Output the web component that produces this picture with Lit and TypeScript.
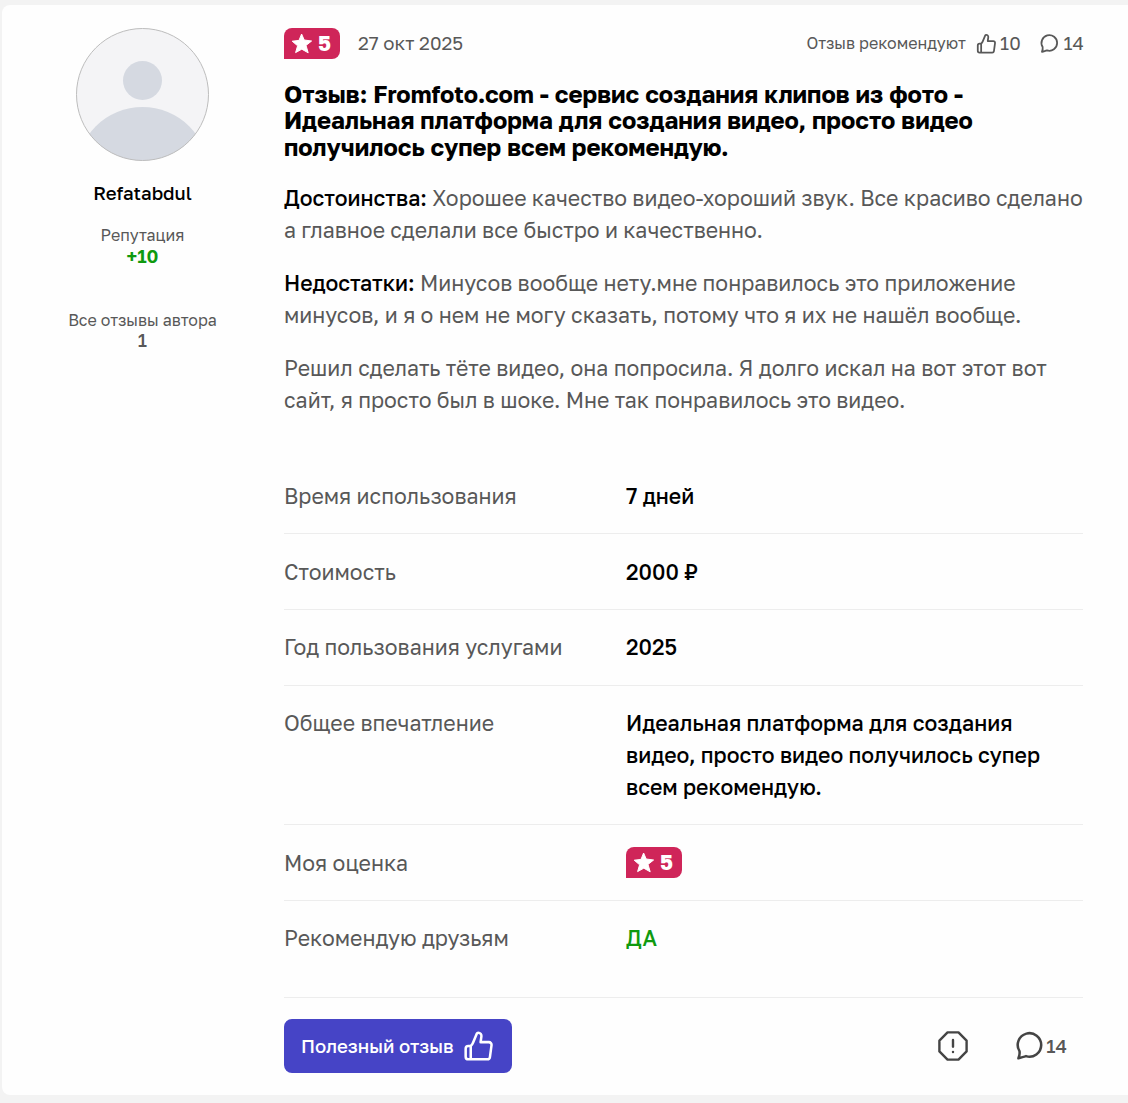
import { LitElement, html, css, svg } from "lit";
import { customElement, property } from "lit/decorators.js";

const bubble = svg`<path d="M3.3 21.2 C4.2 19.2 4.4 17.6 4.1 15.8 A8.8 8.8 0 1 1 9 19.6 C7 20.2 5.2 20.6 3.3 21.2 Z"></path>`;

@customElement("rating-badge")
class RatingBadge extends LitElement {
  @property({ type: Number }) value = 5;
  static styles = css`
    :host { display: flex; }
    .badge {
      display: flex; align-items: center; gap: 5px; box-sizing: border-box;
      width: 55.5px; height: 31.5px; padding-left: 7px;
      border-radius: 8px 8px 8px 0; background: #cf2559; color: #fff;
      font-size: 21.33px; font-weight: 700; line-height: 31px;
    }
    svg { width: 22px; height: 21px; fill: #fff; stroke: #fff; stroke-width: 1; stroke-linejoin: round; }
  `;
  render() {
    return html`<div class="badge">
      <svg viewBox="0 0 22 21"><path d="M10.6 1 L13.2 7 L20.6 8 L15 12.4 L17.2 19.8 L10.8 16.2 L4.6 19.6 L6.6 12.8 L1.2 8.2 L8 7.4 Z"></path></svg>
      <span>${this.value}</span>
    </div>`;
  }
}

@customElement("app-root")
class AppRoot extends LitElement {
  static styles = css`
    :host {
      display: block; box-sizing: border-box; height: 1103px; padding: 5px 0 8px 1.5px;
      overflow: hidden; background: #f3f3f3; color: #585858;
      font-family: "Golos Text", Inter, "Noto Sans", sans-serif;
      font-size: 21.32px; line-height: 32px;
    }
    .card {
      display: flex; box-sizing: border-box; height: 1090px;
      padding: 23px 45px 0 0; background: #fefefe; border-radius: 8px 0 0 8px;
    }
    .author { display: flex; flex-direction: column; align-items: center; flex: 0 0 282px; margin-right: 0.5px; font-size: 16px; line-height: 21.33px; }
    .avatar { width: 133px; height: 133px; }
    .name { margin-top: 22px; font-size: 18.67px; line-height: 21.33px; font-weight: 500; color: #000; }
    .stat { display: flex; flex-direction: column; align-items: center; margin-top: 21px; }
    .stat + .stat { margin-top: 45px; }
    .num { font-size: 18.67px; line-height: 18.4px; font-weight: 500; }
    .green { color: #0f9a0f; }
    .num.green { font-weight: 600; }
    .body { flex: 0 0 799px; }
    .top { display: flex; align-items: center; height: 31px; font-size: 18.67px; line-height: 31px; }
    .date { margin-left: 18.5px; }
    .rec { margin-left: auto; font-size: 16px; }
    .count { display: flex; align-items: center; gap: 3px; }
    .likes { margin-left: 10px; }
    .talks { margin: 0 -1px 0 18.5px; }
    .icon { fill: none; stroke: currentColor; stroke-linejoin: round; stroke-linecap: round; display: block; }
    .s { width: 21.33px; height: 21.33px; }
    h1 { margin: 21.5px 0 0; font-size: 23.83px; line-height: 26.6px; font-weight: 700; color: #000; white-space: nowrap; }
    p { margin: 21.33px 0 0; white-space: nowrap; }
    h1 + p { margin-top: 21.5px; }
    b { font-weight: 500; color: #000; }
    .rows { margin-top: 42.3px; }
    .row { display: grid; grid-template-columns: 342px 1fr; padding: 21.33px 0; border-bottom: 1px solid #ededed; }
    .row:last-child { padding-bottom: 42.67px; }
    .val { font-weight: 500; color: #000; }
    .val.green { color: #0f9a0f; }
    .foot { display: flex; align-items: center; margin-top: 21.33px; height: 54px; font-size: 18.67px; }
    .btn {
      display: flex; align-items: center; justify-content: space-between; box-sizing: border-box;
      width: 228px; height: 54px; padding: 0 17px; border: 0; border-radius: 8px;
      background: #4644c6; color: #fff; font: inherit; font-weight: 500;
    }
    .l { width: 32px; height: 32px; }
    .report { margin-left: auto; color: #444; }
    .reply { display: flex; align-items: center; margin: 0 16px 0 45px; font-weight: 500; }
    .reply svg { color: #444; }
  `;

  private thumb(cls: string, w: number) {
    return html`<svg class="icon ${cls}" viewBox="0 0 24 24" stroke-width=${w}>
      <path d="M5.8 12 H4 a2 2 0 0 0 -2 2 v6 a2 2 0 0 0 2 2 H18.2 a2 2 0 0 0 2 -1.7 L21.4 11.4 a2 2 0 0 0 -2 -2.3 H13.2 L13.8 4.8 A2.4 2.4 0 0 0 11.4 2 Q10.7 2 10.4 2.7 L7.6 9.4 Q7 10.9 5.8 12 V22"></path>
    </svg>`;
  }

  private row(label: string, value: unknown, cls = "") {
    return html`<div class="row"><div>${label}</div><div class="val ${cls}">${value}</div></div>`;
  }

  render() {
    return html`<div class="card">
      <aside class="author">
        <svg class="avatar" viewBox="0 0 133 133">
          <defs><clipPath id="round"><circle cx="66.5" cy="66.5" r="66"></circle></clipPath></defs>
          <g clip-path="url(#round)">
            <rect width="133" height="133" fill="#f4f4f6"></rect>
            <circle cx="66.5" cy="52.5" r="19.5" fill="#d5d9e1"></circle>
            <circle cx="66.5" cy="145" r="66" fill="#d5d9e1"></circle>
          </g>
          <circle cx="66.5" cy="66.5" r="66" fill="none" stroke="#bdbdbd" stroke-width="1"></circle>
        </svg>
        <div class="name">Refatabdul</div>
        <div class="stat"><span>Репутация</span><span class="num green">+10</span></div>
        <div class="stat"><span>Все отзывы автора</span><span class="num">1</span></div>
      </aside>
      <main class="body">
        <div class="top">
          <rating-badge value="5"></rating-badge>
          <span class="date">27 окт 2025</span>
          <span class="rec">Отзыв рекомендуют</span>
          <span class="count likes">${this.thumb("s", 2)}10</span>
          <span class="count talks"><svg class="icon s" viewBox="0 0 24 24" stroke-width="2">${bubble}</svg>14</span>
        </div>
        <h1>Отзыв: Fromfoto.com - сервис создания клипов из фото -<br>Идеальная платформа для создания видео, просто видео<br>получилось супер всем рекомендую.</h1>
        <p><b>Достоинства:</b> Хорошее качество видео-хороший звук. Все красиво сделано<br>а главное сделали все быстро и качественно.</p>
        <p><b>Недостатки:</b> Минусов вообще нету.мне понравилось это приложение<br>минусов, и я о нем не могу сказать, потому что я их не нашёл вообще.</p>
        <p>Решил сделать тёте видео, она попросила. Я долго искал на вот этот вот<br>сайт, я просто был в шоке. Мне так понравилось это видео.</p>
        <div class="rows">
          ${this.row("Время использования", "7 дней")}
          ${this.row("Стоимость", "2000 ₽")}
          ${this.row("Год пользования услугами", "2025")}
          ${this.row("Общее впечатление", html`Идеальная платформа для создания<br>видео, просто видео получилось супер<br>всем рекомендую.`)}
          ${this.row("Моя оценка", html`<rating-badge value="5"></rating-badge>`)}
          ${this.row("Рекомендую друзьям", "ДА", "green")}
        </div>
        <div class="foot">
          <button class="btn">Полезный отзыв${this.thumb("l", 1.9)}</button>
          <svg class="icon l report" viewBox="0 0 24 24" stroke-width="1.8">
            <path d="M7.9 1.8 H16.1 L22.2 7.9 V16.1 L16.1 22.2 H7.9 L1.8 16.1 V7.9 Z M12 7.5 V12.5 M12 16.4 V16.5"></path>
          </svg>
          <span class="reply"><svg class="icon l" viewBox="0 0 24 24" stroke-width="1.9">${bubble}</svg>14</span>
        </div>
      </main>
    </div>`;
  }
}
